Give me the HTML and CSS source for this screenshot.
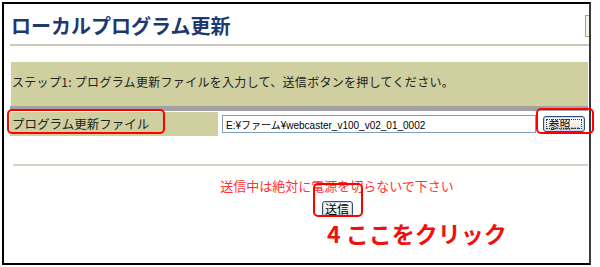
FILE: index.html
```html
<!doctype html>
<html lang="ja">
<head>
	<meta charset="UTF-8">
	<title>ローカルプログラム更新</title>
	<link rel="stylesheet" href="styles.css">
</head>
<body>
	<div class="frame">
		<div class="head">
			<h1 class="title">ローカルプログラム更新</h1>
			<span class="edge-box"></span>
		</div>
		<div class="step">ステップ1: プログラム更新ファイルを入力して、送信ボタンを押してください。</div>
		<div class="bar"></div>
		<div class="file-row">
			<div class="label">プログラム更新ファイル</div>
			<div class="field">
				<input class="path" type="text" value="E:¥ファーム¥webcaster_v100_v02_01_0002">
				<button class="btn btn-browse" type="button">参照...</button>
			</div>
		</div>
		<div class="rule"></div>
		<div class="submit-area">
			<p class="warn">送信中は絶対に電源を切らないで下さい</p>
			<button class="btn btn-send" type="button">送信</button>
		</div>

		<!-- 注釈 -->
		<div class="mark mark-label"></div>
		<div class="mark mark-browse"></div>
		<div class="mark mark-send"></div>
		<div class="note">4 ここをクリック</div>
	</div>
</body>
</html>
```

FILE: styles.css
```css
body {
	margin: 0;
	background: #fff;
	font-family: "Noto Sans CJK JP", "Liberation Sans", sans-serif;
}
.frame {
	position: relative;
	box-sizing: border-box;
	width: 589px;
	height: 263px;
	margin: 2px 0 0 2px;
	padding: 0 1px 0 6px;
	border: 2px solid #000;
	border-right-color: #3a3a3a;
	box-shadow: 0 1px 0 #b0b0b0;
}
.head {
	display: flex;
	justify-content: space-between;
	align-items: center;
	padding: 11px 0 7px;
	margin-right: -1px;
	border-bottom: 2px solid #cbc7ba;
}
.title {
	margin: 0 0 0 1px;
	font-size: 20px;
	line-height: 20px;
	font-weight: bold;
	color: #1c3a6e;
}
.edge-box {
	width: 3px;
	height: 20px;
	border: 1px solid #a8a470;
	border-right: none;
	background: #f4f4ec;
}
.step {
	display: flex;
	align-items: center;
	box-sizing: border-box;
	height: 44px;
	margin: 16px 0 0 1px;
	padding: 0 0 5px 1px;
	background: #cfcf9f;
	font-size: 12px;
	letter-spacing: 0.3px;
	color: #222;
}
.bar {
	height: 5px;
	background: #a2a2a2;
}
.file-row {
	display: flex;
	height: 24px;
	margin-top: 1px;
}
.label {
	width: 206px;
	padding-left: 2px;
	background: #cfcf9f;
	font-size: 12.5px;
	line-height: 24px;
	color: #222;
}
.field {
	flex: 1;
	display: flex;
	align-items: center;
	gap: 7px;
	padding-left: 4px;
}
.path {
	box-sizing: border-box;
	width: 314px;
	height: 18px;
	margin: 0;
	padding: 0 3px;
	border: 1px solid #7f9db9;
	font-family: "Liberation Sans", "Noto Sans CJK JP", sans-serif;
	font-size: 10px;
	color: #000;
	background: #fff;
}
.btn {
	box-sizing: border-box;
	height: 16px;
	margin: 0;
	padding: 0;
	border: 1px solid #2e4f86;
	border-radius: 3px;
	background: linear-gradient(#ffffff, #ecebe3 70%, #d8d6cb);
	box-shadow: inset 0 0 0 1px #c8d8f2;
	font-family: "Noto Sans CJK JP", sans-serif;
	font-size: 11px;
	line-height: 13px;
	color: #000;
}
.btn-browse {
	width: 42px;
	outline: 1px dotted #333;
	outline-offset: -4px;
}
.btn-send {
	width: 31px;
	font-size: 12px;
}
.rule {
	height: 2px;
	margin: 28px 0 0 3px;
	background: #d6d3c4;
}
.submit-area {
	padding-left: 76px;
	text-align: center;
}
.warn {
	margin: 12px 0 1px;
	font-size: 13px;
	line-height: 16px;
	color: #f33;
}
.mark {
	position: absolute;
	box-sizing: border-box;
	border: 2px solid #f00;
	border-radius: 5px;
}
.mark-label {
	left: 3px;
	top: 105px;
	width: 158px;
	height: 25px;
}
.mark-browse {
	left: 532px;
	top: 104px;
	width: 58px;
	height: 26px;
}
.mark-send {
	left: 309px;
	top: 179px;
	width: 50px;
	height: 34px;
}
.note {
	position: absolute;
	left: 323px;
	top: 218px;
	font-size: 23px;
	line-height: 23px;
	font-weight: bold;
	color: #f01010;
	white-space: nowrap;
}
```
